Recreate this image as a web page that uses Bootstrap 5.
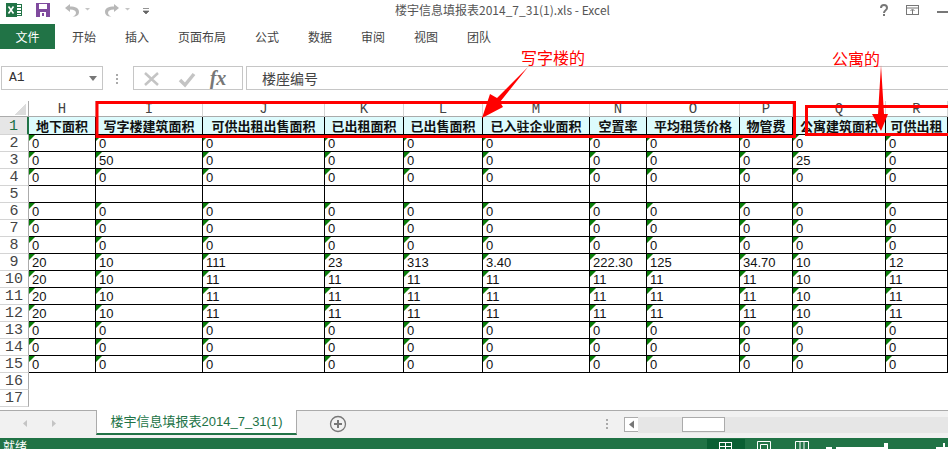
<!DOCTYPE html>
<html lang="zh"><head><meta charset="utf-8"><title>Excel</title>
<link href="https://cdn.jsdelivr.net/npm/bootstrap@5.3.0/dist/css/bootstrap.min.css" rel="stylesheet">
<style>
html,body{margin:0;height:449px;overflow:hidden;background:#fff}
body{font-family:"Noto Sans CJK SC","Liberation Sans",sans-serif;font-size:12px;color:#444;width:948px;position:relative}
.app{height:449px}
.tbar{height:24px}
.ttl{position:absolute;left:395px;top:0;line-height:20px;color:#555}
.tr-ic{position:absolute;top:0;left:0}
.rtabs{height:25px;line-height:25px}
.ftab{width:55px;background:#217346;color:#fff;text-align:center}
.rlist{gap:29px;margin-left:17px;color:#444}
.rblank{height:17px}
.fbar{height:24px;background:#fff}
.nbox{width:102px;margin-left:1px;border:1px solid #c6c6c6;padding-left:7px;font:13px "Liberation Mono",monospace;color:#333;line-height:22px;position:relative}
.nbox i{position:absolute;right:5px;top:9px;border:4px solid transparent;border-top:5px solid #777;border-bottom:0}
.fdots{width:30px}
.fxbox{width:110px;border:1px solid #c6c6c6}
.fval{margin-left:3px;border:1px solid #c6c6c6;border-right:0;padding-left:15px;font-size:14px;line-height:22px;color:#444}
.gap12{height:11px}
.sheet{height:309px;overflow:hidden;position:relative}
.grid{table-layout:fixed;border-collapse:separate;border-spacing:0;width:948px}
.grid td,.grid th{height:17px;padding:0;overflow:hidden;white-space:nowrap;line-height:16px;box-sizing:border-box}
.grid .ch th{height:16px;padding-top:2px;font:14px/13px "Liberation Mono",monospace;text-align:center;color:#444;border-right:1px solid #d4d4d4;border-bottom:1px solid #ababab;background:#fff}
.grid .ch th.cnr{border-right:1px solid #ababab;background:linear-gradient(135deg,transparent 50%,#dcdcdc 50%) no-repeat 15px 3px/11px 11px}
.grid td.rh{font:400 15px/15px "Liberation Mono",monospace;padding:1px 0 0;text-align:center;color:#444;background:#fff;border-right:1px solid #ababab;border-bottom:1px solid #d4d4d4}
.grid td.rh.on{background:#e6e6e6;color:#217346;border-right:2px solid #217346}
.hd td{background:#ddfbfd;font-weight:700;font-size:13px;color:#111;text-align:center;border-right:1px solid #000;border-bottom:1px solid #000}
.grid .hd td{height:18px}
.grid .dt td:not(.rh){font:13px/15px "Liberation Sans",sans-serif;color:#111;padding:1px 0 0 3px;border-right:1px solid #000;border-bottom:1px solid #000;background:linear-gradient(135deg,#0a7d0a 0,#0a7d0a 4px,transparent 4.500px) no-repeat 0 0/7px 7px}
.grid .dt.em td:not(.rh){background:none}
.grid .dt.pl td:not(.rh){border:0}
.over{position:absolute;left:0;top:0;pointer-events:none}
.lab{position:absolute;color:#f00;font-size:16px;line-height:20px}
.lab1{left:521px;top:47px}
.lab2{left:832px;top:48px}
.stabs{height:28px;border-top:1px solid #ababab;background:#f1f1f1;position:relative}
.navar{width:96px}
.stab{width:201px;height:25px;background:#fff;border-left:1px solid #ababab;border-right:1px solid #ababab;margin-top:-1px;border-bottom:2px solid #217346;color:#217346;font:13px/24px "Liberation Sans","Noto Sans CJK SC",sans-serif;text-align:center}
.sbtrack{position:absolute;left:638px;right:0;top:6px;height:16px;background:#e6e6e6}
.sbthumb{position:absolute;left:44px;top:0;width:43px;height:15px;background:#fff;border:1px solid #ababab}
.sbbtn{position:absolute;left:624px;top:6px;width:15px;height:15px;background:#fff;border:1px solid #ababab}
.stat{height:11px;background:#217346;color:#fff;line-height:15px;padding-left:3px;position:relative;overflow:hidden}
</style></head>
<body>
<div class="app d-flex flex-column">
 <div class="tbar position-relative">
  <svg class="tr-ic" width="948" height="24" viewBox="0 0 948 24">
   <rect x="8.500" y="4.500" width="13" height="11" fill="#fff" stroke="#217346"/><rect x="6" y="3" width="11" height="14" fill="#217346"/><path d="M8.500 6.500l5 7M13.500 6.500l-5 7" stroke="#fff" stroke-width="1.600"/><path d="M17 7.500h4M17 10.500h4M17 13.500h4" stroke="#217346"/>
   <rect x="36" y="3" width="14" height="14" fill="#7f4a9e"/><rect x="39" y="4" width="8" height="5" fill="#fff"/><rect x="40" y="12" width="6" height="5" fill="#fff"/><rect x="42" y="13" width="2" height="3" fill="#7f4a9e"/>
   <path d="M70 4l-5 4 5 4v-2.500c4 0 6 1.500 6 3.500 0 1.500-1.500 3-3.500 3.500 4 .5 6.500-1.500 6.500-4.500 0-4-3.500-5.500-9-5.500z" fill="#b8b8b8"/><path d="M85 8h5l-2.500 2.500z" fill="#c4c4c4"/>
   <path d="M114 4l5 4-5 4v-2.500c-4 0-6 1.500-6 3.500 0 1.500 1.500 3 3.500 3.500-4 .5-6.500-1.500-6.500-4.500 0-4 3.500-5.500 9-5.500z" fill="#b8b8b8"/><path d="M125 8h5l-2.500 2.500z" fill="#c4c4c4"/>
   <path d="M143 8.500h6M143 11h6l-3 3z" fill="#666" stroke="#666" stroke-width=".7"/>
   <path d="M881 8c0-4 6-4 6 0 0 2.500-3 2-3 5" fill="none" stroke="#777" stroke-width="2"/><rect x="883" y="14" width="2" height="2" fill="#777"/>
   <rect x="906.500" y="5.500" width="12" height="9" fill="none" stroke="#777"/><path d="M906 8h12M912.500 14v-4M910.500 11l2-2 2 2" fill="none" stroke="#777"/>
   <path d="M937 12h11" stroke="#777" stroke-width="2"/>
  </svg>
  <div class="ttl">楼宇信息填报表2014_7_31(1).xls - Excel</div>
 </div>
 <div class="rtabs d-flex">
  <div class="ftab">文件</div>
  <div class="rlist d-flex"><span>开始</span><span>插入</span><span>页面布局</span><span>公式</span><span>数据</span><span>审阅</span><span>视图</span><span>团队</span></div>
 </div>
 <div class="rblank"></div>
 <div class="fbar d-flex">
  <div class="nbox">A1<i></i></div>
  <div class="fdots"><svg class="d-block" width="30" height="24" viewBox="0 0 30 24"><path d="M14 8v2M14 12v2M14 16v2" stroke="#aaa" stroke-width="2"/></svg></div>
  <div class="fxbox">
   <svg class="d-block" width="108" height="22" viewBox="0 0 108 22"><path d="M11 6l13 12M24 6L11 18" stroke="#c4c4c4" stroke-width="2.500"/><path d="M46 13l5 5 9-11" fill="none" stroke="#c4c4c4" stroke-width="3.500"/><text x="84" y="18" font-family="Liberation Serif" font-style="italic" font-weight="700" font-size="20" fill="#777" text-anchor="middle">fx</text></svg>
  </div>
  <div class="fval flex-grow-1">楼座编号</div>
 </div>
 <div class="gap12"></div>
 <div class="sheet">
  <table class="grid">
   <colgroup><col style="width:29px"><col style="width:67px"><col style="width:107px"><col style="width:122px"><col style="width:79px"><col style="width:79px"><col style="width:107px"><col style="width:57px"><col style="width:93px"><col style="width:53px"><col style="width:93px"><col style="width:62px"></colgroup>
   <tbody>
    <tr class="ch"><th class="cnr"></th><th>H</th><th>I</th><th>J</th><th>K</th><th>L</th><th>M</th><th>N</th><th>O</th><th>P</th><th>Q</th><th>R</th></tr>
    <tr class="hd"><td class="rh on">1</td><td>地下面积</td><td>写字楼建筑面积</td><td>可供出租出售面积</td><td>已出租面积</td><td>已出售面积</td><td>已入驻企业面积</td><td>空置率</td><td>平均租赁价格</td><td>物管费</td><td>公寓建筑面积</td><td>可供出租</td></tr>
    <tr class="dt"><td class="rh">2</td><td>0</td><td>0</td><td>0</td><td>0</td><td>0</td><td>0</td><td>0</td><td>0</td><td>0</td><td>0</td><td>0</td></tr>
    <tr class="dt"><td class="rh">3</td><td>0</td><td>50</td><td>0</td><td>0</td><td>0</td><td>0</td><td>0</td><td>0</td><td>0</td><td>25</td><td>0</td></tr>
    <tr class="dt"><td class="rh">4</td><td>0</td><td>0</td><td>0</td><td>0</td><td>0</td><td>0</td><td>0</td><td>0</td><td>0</td><td>0</td><td>0</td></tr>
    <tr class="dt em"><td class="rh">5</td><td></td><td></td><td></td><td></td><td></td><td></td><td></td><td></td><td></td><td></td><td></td></tr>
    <tr class="dt"><td class="rh">6</td><td>0</td><td>0</td><td>0</td><td>0</td><td>0</td><td>0</td><td>0</td><td>0</td><td>0</td><td>0</td><td>0</td></tr>
    <tr class="dt"><td class="rh">7</td><td>0</td><td>0</td><td>0</td><td>0</td><td>0</td><td>0</td><td>0</td><td>0</td><td>0</td><td>0</td><td>0</td></tr>
    <tr class="dt"><td class="rh">8</td><td>0</td><td>0</td><td>0</td><td>0</td><td>0</td><td>0</td><td>0</td><td>0</td><td>0</td><td>0</td><td>0</td></tr>
    <tr class="dt"><td class="rh">9</td><td>20</td><td>10</td><td>111</td><td>23</td><td>313</td><td>3.40</td><td>222.30</td><td>125</td><td>34.70</td><td>10</td><td>12</td></tr>
    <tr class="dt"><td class="rh">10</td><td>20</td><td>10</td><td>11</td><td>11</td><td>11</td><td>11</td><td>11</td><td>11</td><td>11</td><td>10</td><td>11</td></tr>
    <tr class="dt"><td class="rh">11</td><td>20</td><td>10</td><td>11</td><td>11</td><td>11</td><td>11</td><td>11</td><td>11</td><td>11</td><td>10</td><td>11</td></tr>
    <tr class="dt"><td class="rh">12</td><td>20</td><td>10</td><td>11</td><td>11</td><td>11</td><td>11</td><td>11</td><td>11</td><td>11</td><td>10</td><td>11</td></tr>
    <tr class="dt"><td class="rh">13</td><td>0</td><td>0</td><td>0</td><td>0</td><td>0</td><td>0</td><td>0</td><td>0</td><td>0</td><td>0</td><td>0</td></tr>
    <tr class="dt"><td class="rh">14</td><td>0</td><td>0</td><td>0</td><td>0</td><td>0</td><td>0</td><td>0</td><td>0</td><td>0</td><td>0</td><td>0</td></tr>
    <tr class="dt"><td class="rh">15</td><td>0</td><td>0</td><td>0</td><td>0</td><td>0</td><td>0</td><td>0</td><td>0</td><td>0</td><td>0</td><td>0</td></tr>
    <tr class="dt em pl"><td class="rh">16</td><td colspan="11"></td></tr>
    <tr class="dt em pl"><td class="rh">17</td><td colspan="11"></td></tr>
   </tbody>
  </table>
 </div>
 <div class="stabs d-flex">
  <div class="navar"><svg width="96" height="24" viewBox="0 0 96 24"><path d="M27 9l-4 3.500 4 3.500zM52 9l4 3.500-4 3.500z" fill="#c4c4c4"/></svg></div>
  <div class="stab">楼宇信息填报表2014_7_31(1)</div>
  <svg class="ms-3" width="50" height="24" viewBox="0 0 50 24"><circle cx="25" cy="13" r="7.500" fill="none" stroke="#777" stroke-width="1.300"/><path d="M21 13h8M25 9v8" stroke="#777" stroke-width="2"/></svg>
  <svg class="over" width="620" height="28" viewBox="0 0 620 28"><path d="M607 8v2M607 12v2M607 16v2" stroke="#aaa" stroke-width="2"/></svg>
  <div class="sbbtn"><svg class="d-block" width="13" height="13" viewBox="0 0 13 13"><path d="M9 2.500L4 6.500l5 4z" fill="#777"/></svg></div>
  <div class="sbtrack"><div class="sbthumb"></div></div>
 </div>
 <div class="stat">就绪
  <svg class="over" width="948" height="11" viewBox="0 0 948 11"><rect x="707" y="1" width="38" height="10" fill="#0a5f33"/><path d="M719.500 4v7M725.500 4v7M731.500 4v7M719 4.500h13M719 8.500h13" stroke="#fff" fill="none"/><path d="M757.500 11V3.500h13V11M760.500 11V6.500h7V11" stroke="#fff" fill="none"/><path d="M795.500 11V3.500h13V11M800 4v7M804 4v7" stroke="#fff" fill="none"/><rect x="826" y="9" width="6" height="2" fill="#fff"/><rect x="836" y="9" width="50" height="2" fill="#fff"/><rect x="884" y="5" width="4" height="6" fill="#fff"/><rect x="936" y="9" width="12" height="2" fill="#fff"/><rect x="943" y="5" width="2" height="6" fill="#fff"/></svg>
 </div>
</div>
<svg class="over" width="948" height="449" viewBox="0 0 948 449">
 <rect x="97" y="102.500" width="697.500" height="34" fill="none" stroke="#f00" stroke-width="3"/>
 <path d="M948 106.500H806.500V134.500H948" fill="none" stroke="#f00" stroke-width="3"/>
 <path d="M528 67L497 98 490 94 482 118 503 107 500 102z" fill="#f00"/>
 <path d="M881 65L878 114 872 114 881 131 888 114 884 114z" fill="#f00"/>
</svg>
<div class="lab lab1">写字楼的</div>
<div class="lab lab2">公寓的</div>
</body></html>
